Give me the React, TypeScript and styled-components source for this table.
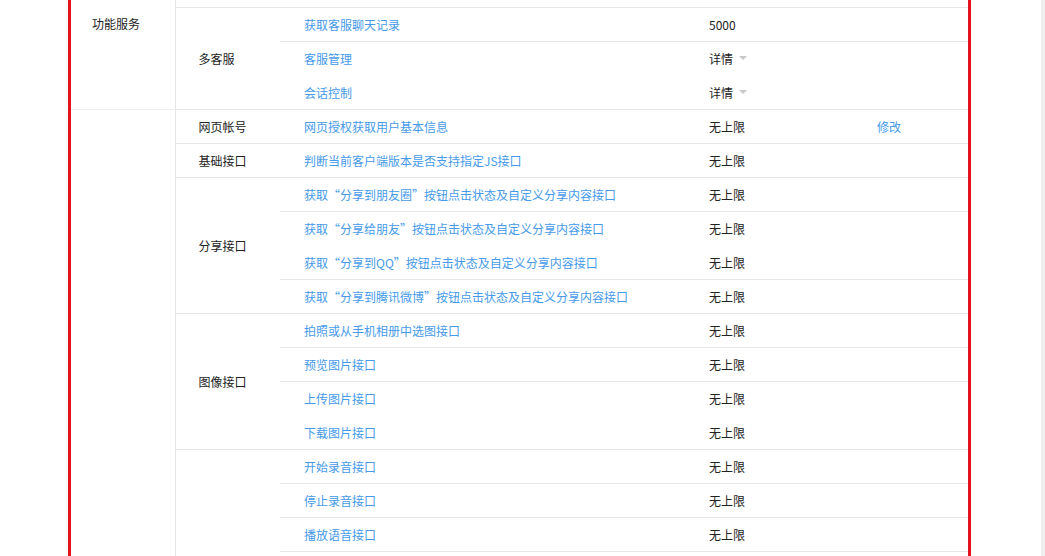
import React, { useLayoutEffect, useRef } from "react";
import styled, { createGlobalStyle } from "styled-components";

const GlobalStyle = createGlobalStyle`
  html, body {
    margin: 0;
    padding: 0;
    background: #ffffff;
    overflow: hidden;
  }
  body {
    font-family: "Noto Sans CJK SC", "Microsoft YaHei", sans-serif;
    font-size: 12px;
    color: #222222;
  }
`;

const Viewport = styled.div`
  display: flex;
  height: 556px;
  width: 1045px;
`;

const Scroller = styled.div`
  flex: 1;
  height: 100%;
  overflow: hidden;
  padding-left: 68px;
`;

const ScrollTrack = styled.div`
  width: 4px;
  height: 100%;
  background: #efefef;
`;

const Panel = styled.div`
  width: 903px;
  box-sizing: border-box;
  border-left: 3px solid #e3121d;
  border-right: 3px solid #e3121d;
  padding-bottom: 40px;
`;

const Table = styled.table`
  width: 897px;
  border-collapse: collapse;
  table-layout: fixed;
`;

const Row = styled.tr`
  height: 34px;
`;

const CategoryCell = styled.td`
  padding: 0 0 0 21px;
  border-right: 1px solid #e6e6e6;
  border-bottom: 1px solid #eeeeee;
  vertical-align: middle;
  color: #222222;
  white-space: nowrap;
`;

const GroupCell = styled.td`
  padding: 0 0 0 23px;
  border-bottom: 1px solid #e8e8e8;
  vertical-align: middle;
  color: #222222;
  white-space: nowrap;
`;

const ItemCell = styled.td<{ $seamless?: boolean }>`
  padding: 0 0 0 24px;
  border-bottom: 1px solid ${(p) => (p.$seamless ? "transparent" : "#e8e8e8")};
  vertical-align: middle;
  white-space: nowrap;
  overflow: hidden;
`;

const Link = styled.a`
  color: #459ae9;
  text-decoration: none;
  cursor: pointer;
`;

const Quota = styled.span`
  color: #222222;
`;

const Detail = styled.span`
  display: inline-flex;
  align-items: center;
  color: #222222;
  cursor: pointer;
`;

const Caret = styled.i`
  display: inline-block;
  width: 0;
  height: 0;
  margin-left: 6px;
  border-left: 4px solid transparent;
  border-right: 4px solid transparent;
  border-top: 4px solid #c8c8c8;
`;

type Item = {
  name: string;
  quota: string;
  detail?: boolean;
  action?: string;
  seamless?: boolean;
};
type Group = { label: string; items: Item[] };
type Category = { label: string; groups: Group[] };

const u = "无上限";

const data: Category[] = [
  {
    label: "功能服务",
    groups: [
      {
        label: "模板消息",
        items: [
          { name: "设置所属行业", quota: u },
          { name: "发送模板消息", quota: "100000" },
        ],
      },
      {
        label: "多客服",
        items: [
          { name: "获取客服聊天记录", quota: "5000" },
          { name: "客服管理", quota: "详情", detail: true, seamless: true },
          { name: "会话控制", quota: "详情", detail: true },
        ],
      },
    ],
  },
  {
    label: "网页服务",
    groups: [
      {
        label: "网页帐号",
        items: [{ name: "网页授权获取用户基本信息", quota: u, action: "修改" }],
      },
      {
        label: "基础接口",
        items: [{ name: "判断当前客户端版本是否支持指定JS接口", quota: u }],
      },
      {
        label: "分享接口",
        items: [
          { name: "获取“分享到朋友圈”按钮点击状态及自定义分享内容接口", quota: u },
          { name: "获取“分享给朋友”按钮点击状态及自定义分享内容接口", quota: u, seamless: true },
          { name: "获取“分享到QQ”按钮点击状态及自定义分享内容接口", quota: u },
          { name: "获取“分享到腾讯微博”按钮点击状态及自定义分享内容接口", quota: u },
        ],
      },
      {
        label: "图像接口",
        items: [
          { name: "拍照或从手机相册中选图接口", quota: u },
          { name: "预览图片接口", quota: u },
          { name: "上传图片接口", quota: u, seamless: true },
          { name: "下载图片接口", quota: u },
        ],
      },
      {
        label: "音频接口",
        items: [
          { name: "开始录音接口", quota: u },
          { name: "停止录音接口", quota: u },
          { name: "播放语音接口", quota: u },
          { name: "暂停播放接口", quota: u },
          { name: "停止播放接口", quota: u },
          { name: "上传语音接口", quota: u },
          { name: "下载语音接口", quota: u },
        ],
      },
      {
        label: "智能接口",
        items: [{ name: "识别音频并返回识别结果接口", quota: u }],
      },
      {
        label: "设备信息",
        items: [{ name: "获取网络状态接口", quota: u }],
      },
      {
        label: "地理位置",
        items: [
          { name: "使用微信内置地图查看位置接口", quota: u },
          { name: "获取地理位置接口", quota: u },
        ],
      },
      {
        label: "界面操作",
        items: [
          { name: "隐藏右上角菜单接口", quota: u },
          { name: "显示右上角菜单接口", quota: u },
          { name: "关闭当前网页窗口接口", quota: u },
          { name: "批量隐藏功能按钮接口", quota: u },
          { name: "批量显示功能按钮接口", quota: u },
          { name: "隐藏所有非基础按钮接口", quota: u },
          { name: "显示所有功能按钮接口", quota: u },
        ],
      },
      {
        label: "微信扫一扫",
        items: [{ name: "调起微信扫一扫接口", quota: u }],
      },
      {
        label: "微信小店",
        items: [{ name: "跳转微信商品页接口", quota: u }],
      },
      {
        label: "微信卡券",
        items: [
          { name: "调起适用于门店的卡券列表并获取用户选择列表", quota: u },
          { name: "批量添加卡券接口", quota: u },
          { name: "调起查看微信卡券接口", quota: u },
        ],
      },
      {
        label: "微信支付",
        items: [{ name: "发起一个微信支付请求", quota: u }],
      },
    ],
  },
];

function renderRows() {
  const rows: React.ReactNode[] = [];
  data.forEach((cat, ci) => {
    const total = cat.groups.reduce((n, g) => n + g.items.length, 0);
    let first = true;
    cat.groups.forEach((group, gi) => {
      group.items.forEach((item, ii) => {
        rows.push(
          <Row key={`${ci}-${gi}-${ii}`}>
            {first && <CategoryCell rowSpan={total}>{cat.label}</CategoryCell>}
            {ii === 0 && <GroupCell rowSpan={group.items.length}>{group.label}</GroupCell>}
            <ItemCell $seamless={item.seamless}>
              <Link>{item.name}</Link>
            </ItemCell>
            <ItemCell $seamless={item.seamless}>
              {item.detail ? (
                <Detail>
                  {item.quota}
                  <Caret />
                </Detail>
              ) : (
                <Quota>{item.quota}</Quota>
              )}
            </ItemCell>
            <ItemCell $seamless={item.seamless}>
              {item.action ? <Link>{item.action}</Link> : null}
            </ItemCell>
          </Row>
        );
        first = false;
      });
    });
  });
  return rows;
}

export default function App() {
  const scrollRef = useRef<HTMLDivElement>(null);
  useLayoutEffect(() => {
    if (scrollRef.current) scrollRef.current.scrollTop = 61;
  }, []);
  return (
    <>
      <GlobalStyle />
      <Viewport lang="zh-CN">
        <Scroller ref={scrollRef}>
          <Panel>
            <Table>
              <colgroup>
                <col style={{ width: 104 }} />
                <col style={{ width: 105 }} />
                <col style={{ width: 405 }} />
                <col style={{ width: 168 }} />
                <col style={{ width: 115 }} />
              </colgroup>
              <tbody>{renderRows()}</tbody>
            </Table>
          </Panel>
        </Scroller>
        <ScrollTrack />
      </Viewport>
    </>
  );
}
